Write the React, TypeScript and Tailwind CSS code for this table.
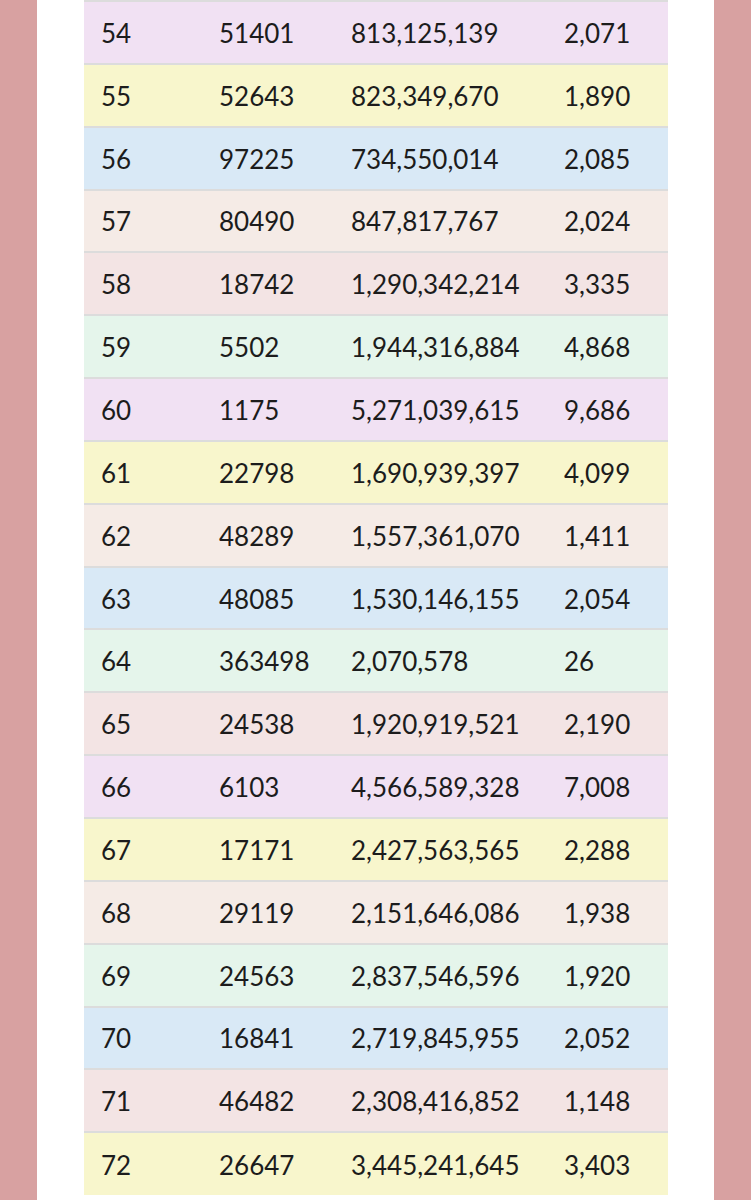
const rows: [string, string, string, string, string][] = [
  ["54", "51401", "813,125,139", "2,071", "bg-[#f1e1f3]"],
  ["55", "52643", "823,349,670", "1,890", "bg-[#f8f6cc]"],
  ["56", "97225", "734,550,014", "2,085", "bg-[#d9e9f6]"],
  ["57", "80490", "847,817,767", "2,024", "bg-[#f5ebe6]"],
  ["58", "18742", "1,290,342,214", "3,335", "bg-[#f3e4e4]"],
  ["59", "5502", "1,944,316,884", "4,868", "bg-[#e5f5eb]"],
  ["60", "1175", "5,271,039,615", "9,686", "bg-[#f1e1f3]"],
  ["61", "22798", "1,690,939,397", "4,099", "bg-[#f8f6cc]"],
  ["62", "48289", "1,557,361,070", "1,411", "bg-[#f5ebe6]"],
  ["63", "48085", "1,530,146,155", "2,054", "bg-[#d9e9f6]"],
  ["64", "363498", "2,070,578", "26", "bg-[#e5f5eb]"],
  ["65", "24538", "1,920,919,521", "2,190", "bg-[#f3e4e4]"],
  ["66", "6103", "4,566,589,328", "7,008", "bg-[#f1e1f3]"],
  ["67", "17171", "2,427,563,565", "2,288", "bg-[#f8f6cc]"],
  ["68", "29119", "2,151,646,086", "1,938", "bg-[#f5ebe6]"],
  ["69", "24563", "2,837,546,596", "1,920", "bg-[#e5f5eb]"],
  ["70", "16841", "2,719,845,955", "2,052", "bg-[#d9e9f6]"],
  ["71", "46482", "2,308,416,852", "1,148", "bg-[#f3e4e4]"],
  ["72", "26647", "3,445,241,645", "3,403", "bg-[#f8f6cc]"],
];

export default function App() {
  return (
    <div className="min-h-[1200px] bg-[#d8a1a1] px-[37px] font-['Lato','Liberation_Sans',sans-serif]">
      <div className="min-h-[1200px] bg-white pl-[47px] pr-[46px]">
        <table className="w-full border-collapse text-[26px] text-[#1c1c1c]">
          <colgroup>
            <col className="w-[118px]" />
            <col className="w-[132px]" />
            <col className="w-[213px]" />
            <col />
          </colgroup>
          <tbody>
            {rows.map(([n, a, b, c, bg]) => (
              <tr key={n} className={`${bg} h-[62.85px] border-t-2 border-[#dcdcdc]`}>
                <td className="pl-[17px] pt-[2px] align-middle">{n}</td>
                <td className="pl-[17px] pt-[2px] align-middle">{a}</td>
                <td className="pl-[17px] pt-[2px] align-middle">{b}</td>
                <td className="pl-[17px] pt-[2px] align-middle">{c}</td>
              </tr>
            ))}
          </tbody>
        </table>
      </div>
    </div>
  );
}
